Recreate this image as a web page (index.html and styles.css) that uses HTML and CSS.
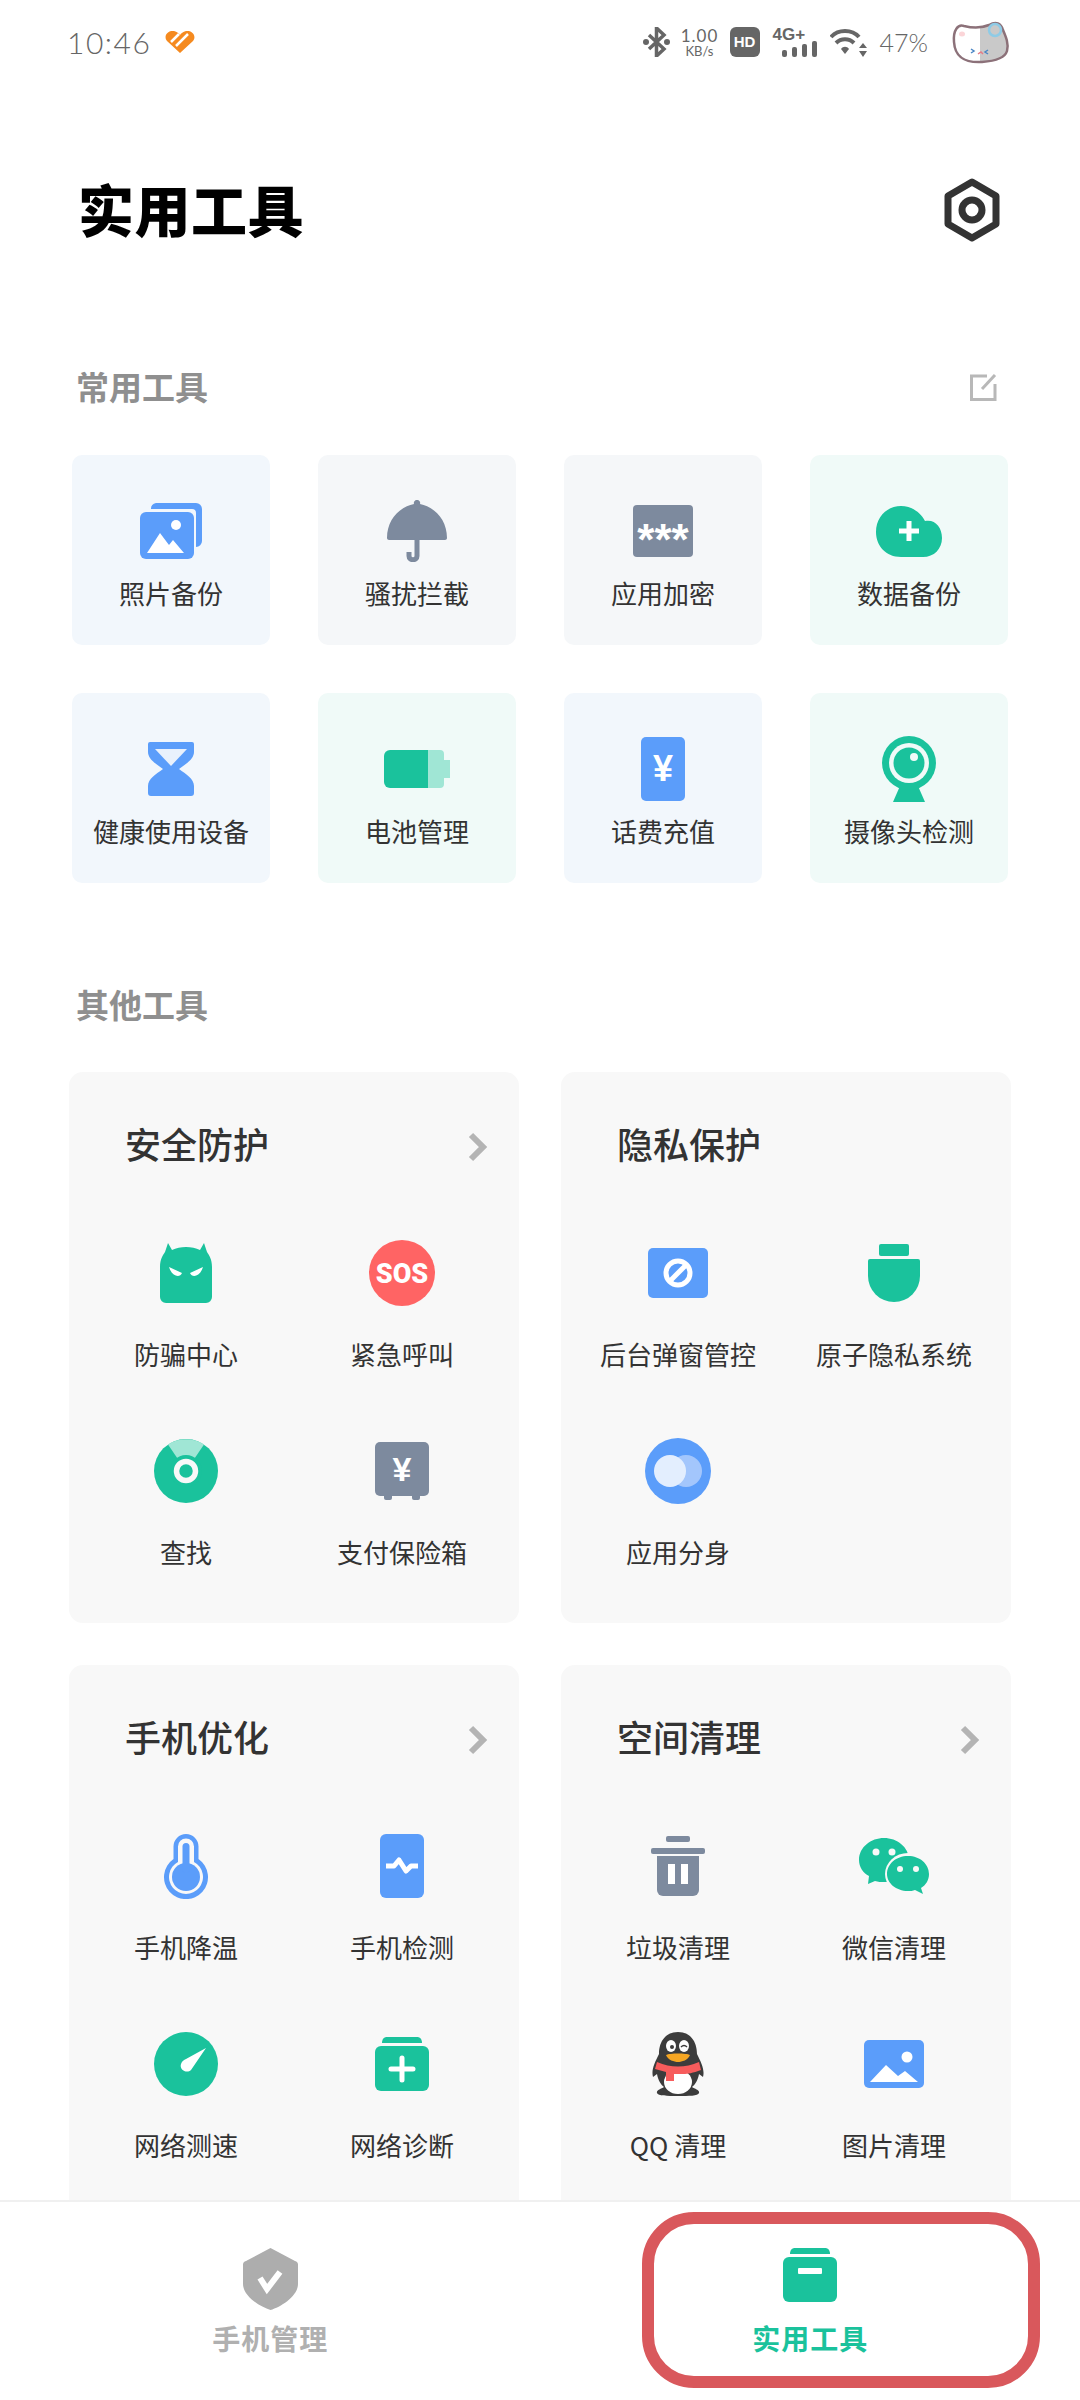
FILE: index.html
```html
<!DOCTYPE html>
<html lang="zh">
<head>
<meta charset="utf-8">
<title>实用工具</title>
<link rel="stylesheet" href="styles.css">
</head>
<body>
<div class="page">

<div class="status">
	<div class="status-left">
		<span class="time">10:46</span>
		<svg width="30" height="22" viewBox="0 0 30 22"><path d="M15 22 2 10C-2 5 3-1 9 0c3 .5 5 2.500 6 4 1-1.500 3-3.500 6-4 6-1 11 5 7 10z" fill="#f58a1f"/><path d="M14 3 6 11M23 3 11 15" stroke="#fff" stroke-width="2.500" fill="none"/></svg>
	</div>
	<div class="status-right">
		<svg width="27" height="30" viewBox="0 0 27 30"><path d="M6 8l15 14-7.500 7V1L21 8 6 22" fill="none" stroke="#666" stroke-width="3.500"/><circle cx="3" cy="15" r="3" fill="#666"/><circle cx="24" cy="15" r="3" fill="#666"/></svg>
		<div class="speed"><span class="speed-num">1.00</span><span class="speed-unit">KB/s</span></div>
		<div class="hd">HD</div>
		<div class="net">
			<span class="net-type">4G+</span>
			<svg width="35" height="16" viewBox="0 0 35 16"><g fill="#666"><rect x="0" y="9" width="5" height="7" rx="2"/><rect x="10" y="6" width="5" height="10" rx="2"/><rect x="20" y="3" width="5" height="13" rx="2"/><rect x="30" y="0" width="5" height="16" rx="2"/></g></svg>
		</div>
		<svg width="37" height="29" viewBox="0 0 37 29"><g fill="none" stroke="#666" stroke-width="4"><path d="M1 9C8 1 22 1 29 9"/><path d="M6 15c5-5 13-5 18 0"/></g><path d="M11 21c2-3 6-3 8 0l-4 5z" fill="#666"/><path d="M33 15l4 5h-8zM33 29l4-6h-8z" fill="#666"/></svg>
		<span class="battery">47%</span>
		<svg class="cat" width="66" height="50" viewBox="0 0 66 50">
			<path d="M3 25C2 10 8 3 16 5c8 2 18 2 26-1 8-4 14-2 17 6 4 8 7 16 4 25-3 9-12 13-28 14C14 50 4 42 3 25z" fill="#fff"/>
			<path d="M33 9c4 0 6 0 9-1 7-4 12-2 14 5 3 7 6 14 4 21-2 7-10 10-27 11z" fill="#c9c9c9"/>
			<path d="M7 25C6 13 11 7 17 9c8 2 18 2 25-1 7-4 12-2 14 5 3 7 6 14 4 21-2 7-11 10-25 11C17 46 8 40 7 25z" fill="none" stroke="#8c7179" stroke-width="2.500"/>
			<circle cx="48" cy="13" r="6" fill="none" stroke="#8ecbe6" stroke-width="2.500"/>
			<ellipse cx="15" cy="17" rx="3" ry="2.500" fill="#fbd5d8"/>
			<path d="M24 32l3 2-3 2" fill="none" stroke="#4a86c5" stroke-width="1.500"/>
			<path d="M41 33l-3 2 3 2" fill="none" stroke="#4a86c5" stroke-width="1.500"/>
			<path d="M31 37l3-2 2 2" fill="none" stroke="#e57c86" stroke-width="1.500"/>
		</svg>
	</div>
</div>

<div class="page-head">
	<h1 class="page-title">实用工具</h1>
	<svg width="56" height="64" viewBox="0 0 56 64"><path d="M28 4 52 18V46L28 60 4 46V18z" fill="none" stroke="#333" stroke-width="7" stroke-linejoin="round"/><circle cx="28" cy="32" r="10" fill="none" stroke="#333" stroke-width="7"/></svg>
</div>

<div class="section-head first">
	<h2 class="section-title">常用工具</h2>
	<svg width="27" height="27" viewBox="0 0 27 27"><path d="M17 2H1.500V25.500H25V10" fill="none" stroke="#b8b8b8" stroke-width="3"/><path d="M12 15 25 1" stroke="#b8b8b8" stroke-width="3" fill="none"/></svg>
</div>

<div class="tools">
	<div class="tool tint-blue">
		<div class="icon-box"><svg width="62" height="56" viewBox="0 0 62 56">
			<path d="M16 0H56a6 6 0 0 1 6 6V38a6 6 0 0 1-6 6V10a4 4 0 0 0-4-4H11a6 6 0 0 1 5-6z" fill="#5b9dfa"/>
			<rect x="0" y="9" width="54" height="47" rx="6" fill="#5b9dfa"/>
			<circle cx="36" cy="22" r="5" fill="#fff"/>
			<path d="M7 50 20 30l9 12 4-5 11 13z" fill="#fff"/>
		</svg></div>
		<div class="tool-name">照片备份</div>
	</div>
	<div class="tool tint-grey">
		<div class="icon-box"><svg width="60" height="62" viewBox="0 0 60 62">
			<path d="M30 0a3 3 0 0 1 3 4C48 7 60 20 60 38c0 1-1 2-2 2H2c-1 0-2-1-2-2C0 20 12 7 27 4a3 3 0 0 1 3-4z" fill="#7d8a9e"/>
			<path d="M30 38V56c0 5-8 5-8 0V52" fill="none" stroke="#7d8a9e" stroke-width="5"/>
		</svg></div>
		<div class="tool-name">骚扰拦截</div>
	</div>
	<div class="tool tint-grey">
		<div class="icon-box"><div class="keypad">***</div></div>
		<div class="tool-name">应用加密</div>
	</div>
	<div class="tool tint-green">
		<div class="icon-box"><svg width="66" height="51" viewBox="0 0 66 51">
			<path d="M25 51C10 51 0 40 0 26 0 11 11 0 25 0c11 0 20 7 24 15 10-2 17 6 17 17 0 11-8 19-19 19z" fill="#1ac29c"/>
			<path d="M33 15V35M23 25H43" stroke="#fff" stroke-width="5"/>
		</svg></div>
		<div class="tool-name">数据备份</div>
	</div>

	<div class="tool tint-blue">
		<div class="icon-box"><svg width="46" height="54" viewBox="0 0 46 54">
			<path d="M0 2a2 2 0 0 1 2-2H44a2 2 0 0 1 2 2V10c0 7-8 12-15 17 7 5 15 10 15 17V51a3 3 0 0 1-3 3H3a3 3 0 0 1-3-3V44c0-7 8-12 15-17C8 22 0 17 0 10z" fill="#5b9dfa"/>
			<path d="M7 7H39L23 24z" fill="#e9f1fc"/>
		</svg></div>
		<div class="tool-name">健康使用设备</div>
	</div>
	<div class="tool tint-green">
		<div class="icon-box"><svg width="66" height="38" viewBox="0 0 66 38">
			<path d="M44 0h12a4 4 0 0 1 4 4V10h6V28h-6V34a4 4 0 0 1-4 4H44z" fill="#a0e6d5"/>
			<path d="M6 0H44V38H6a6 6 0 0 1-6-6V6a6 6 0 0 1 6-6z" fill="#1ac29c"/>
		</svg></div>
		<div class="tool-name">电池管理</div>
	</div>
	<div class="tool tint-blue">
		<div class="icon-box"><svg width="44" height="64" viewBox="0 0 44 64">
			<rect width="44" height="64" rx="5" fill="#5b9dfa"/>
			<text class="glyph-bold" x="22" y="44" font-size="36" text-anchor="middle" fill="#fff">¥</text>
		</svg></div>
		<div class="tool-name">话费充值</div>
	</div>
	<div class="tool tint-green">
		<div class="icon-box"><svg width="54" height="66" viewBox="0 0 54 66">
			<path d="M18 50H36L43 66H11z" fill="#1ac29c"/>
			<circle cx="27" cy="27" r="27" fill="#1ac29c"/>
			<circle cx="27" cy="27" r="20" fill="#f0faf8"/>
			<circle cx="27" cy="27" r="15.500" fill="#1ac29c"/>
			<circle cx="32" cy="21" r="4" fill="#f0faf8"/>
		</svg></div>
		<div class="tool-name">摄像头检测</div>
	</div>
</div>

<div class="section-head second">
	<h2 class="section-title">其他工具</h2>
</div>

<div class="groups">
	<div class="group">
		<div class="group-head">
			<h3 class="group-title">安全防护</h3>
			<svg class="chevron" width="20" height="30" viewBox="0 0 20 30"><path d="M3 3 15 15 3 27" fill="none" stroke="#b4b4b4" stroke-width="6"/></svg>
		</div>
		<div class="items">
			<div class="item">
				<div class="icon-box"><svg width="52" height="60" viewBox="0 0 52 60">
					<path d="M0 24C0 16 3 12 5 9L8 0l4 7c4-2 9-3 14-3s10 1 14 3l4-7 3 9c2 3 5 7 5 15V54a6 6 0 0 1-6 6H6a6 6 0 0 1-6-6z" fill="#1ac29c"/>
					<path d="M9 24l13 6c-2 5-10 4-13-6zM43 24l-13 6c2 5 10 4 13-6z" fill="#fff"/>
				</svg></div>
				<div class="item-name">防骗中心</div>
			</div>
			<div class="item">
				<div class="icon-box"><svg width="66" height="66" viewBox="0 0 66 66">
					<circle cx="33" cy="33" r="33" fill="#ff6464"/>
					<text class="glyph-sos" x="33" y="43" font-size="27" text-anchor="middle" fill="#fff">SOS</text>
				</svg></div>
				<div class="item-name">紧急呼叫</div>
			</div>
			<div class="item">
				<div class="icon-box"><svg width="64" height="64" viewBox="0 0 64 64">
					<circle cx="32" cy="32" r="32" fill="#1ac29c"/>
					<path d="M14 5.500C24-1.500 40-1.500 50 5.500L32 32z" fill="#a0e6d5"/>
					<circle cx="32" cy="32" r="16" fill="#1ac29c"/>
					<circle cx="32" cy="32" r="9.500" fill="none" stroke="#f8f8f8" stroke-width="5.500"/>
				</svg></div>
				<div class="item-name">查找</div>
			</div>
			<div class="item">
				<div class="icon-box"><svg width="54" height="58" viewBox="0 0 54 58">
					<rect x="9" y="50" width="8" height="8" rx="2" fill="#7d8a9e"/>
					<rect x="37" y="50" width="8" height="8" rx="2" fill="#7d8a9e"/>
					<rect width="54" height="54" rx="5" fill="#7d8a9e"/>
					<text class="glyph-bold" x="27" y="39" font-size="34" text-anchor="middle" fill="#fff">¥</text>
				</svg></div>
				<div class="item-name">支付保险箱</div>
			</div>
		</div>
	</div>

	<div class="group">
		<div class="group-head">
			<h3 class="group-title">隐私保护</h3>
		</div>
		<div class="items">
			<div class="item">
				<div class="icon-box"><svg width="60" height="50" viewBox="0 0 60 50">
					<rect width="60" height="50" rx="5" fill="#5b9dfa"/>
					<circle cx="30" cy="25" r="12" fill="none" stroke="#fff" stroke-width="5"/>
					<path d="M22 33 38 17" stroke="#fff" stroke-width="5"/>
				</svg></div>
				<div class="item-name">后台弹窗管控</div>
			</div>
			<div class="item">
				<div class="icon-box"><svg width="52" height="58" viewBox="0 0 52 58">
					<rect x="11" y="0" width="30" height="12" rx="2" fill="#1ac29c"/>
					<path d="M2 15H50a2 2 0 0 1 2 2V32a26 26 0 0 1-52 0V17a2 2 0 0 1 2-2z" fill="#1ac29c"/>
				</svg></div>
				<div class="item-name">原子隐私系统</div>
			</div>
			<div class="item">
				<div class="icon-box"><svg width="66" height="66" viewBox="0 0 66 66">
					<circle cx="33" cy="33" r="33" fill="#5b9dfa"/>
					<circle cx="41" cy="33" r="16" fill="#a3c6fc"/>
					<circle cx="25" cy="33" r="16" fill="#e3eefe"/>
				</svg></div>
				<div class="item-name">应用分身</div>
			</div>
		</div>
	</div>

	<div class="group">
		<div class="group-head">
			<h3 class="group-title">手机优化</h3>
			<svg class="chevron" width="20" height="30" viewBox="0 0 20 30"><path d="M3 3 15 15 3 27" fill="none" stroke="#b4b4b4" stroke-width="6"/></svg>
		</div>
		<div class="items">
			<div class="item">
				<div class="icon-box"><svg width="44" height="65" viewBox="0 0 44 65">
					<path d="M9.500 25V12.500a12.500 12.500 0 0 1 25 0V25A22 22 0 1 1 9.500 25z" fill="#5b9dfa"/>
					<path d="M14 28V12.500a8 8 0 0 1 16 0V28A17 17 0 1 1 14 28z" fill="#f8f8f8"/>
					<circle cx="22" cy="43" r="14" fill="#5b9dfa"/>
					<rect x="18.500" y="9" width="7" height="30" rx="3.500" fill="#5b9dfa"/>
				</svg></div>
				<div class="item-name">手机降温</div>
			</div>
			<div class="item">
				<div class="icon-box"><svg width="44" height="64" viewBox="0 0 44 64">
					<rect width="44" height="64" rx="6" fill="#5b9dfa"/>
					<path d="M6 32H14L19 26 26 37 31 32H38" fill="none" stroke="#fff" stroke-width="5" stroke-linejoin="round"/>
				</svg></div>
				<div class="item-name">手机检测</div>
			</div>
			<div class="item">
				<div class="icon-box"><svg width="64" height="64" viewBox="0 0 64 64">
					<circle cx="32" cy="32" r="32" fill="#1ac29c"/>
					<path d="M52 16 37 38c-4 4-12 0-10-6 1-3 3-4 5-5z" fill="#fff"/>
				</svg></div>
				<div class="item-name">网络测速</div>
			</div>
			<div class="item">
				<div class="icon-box"><svg width="54" height="54" viewBox="0 0 54 54">
					<path d="M7 6C7 2 9 0 12 0H42c3 0 5 2 5 6z" fill="#1ac29c"/>
					<rect y="9" width="54" height="45" rx="6" fill="#1ac29c"/>
					<path d="M27 21V43M16 32H38" stroke="#fff" stroke-width="5" stroke-linecap="round"/>
				</svg></div>
				<div class="item-name">网络诊断</div>
			</div>
		</div>
	</div>

	<div class="group">
		<div class="group-head">
			<h3 class="group-title">空间清理</h3>
			<svg class="chevron" width="20" height="30" viewBox="0 0 20 30"><path d="M3 3 15 15 3 27" fill="none" stroke="#b4b4b4" stroke-width="6"/></svg>
		</div>
		<div class="items">
			<div class="item">
				<div class="icon-box"><svg width="54" height="60" viewBox="0 0 54 60">
					<rect x="15" y="0" width="24" height="6" rx="2" fill="#7d8a9e"/>
					<rect x="0" y="12" width="54" height="6" rx="2" fill="#7d8a9e"/>
					<path d="M6 20H48V54a6 6 0 0 1-6 6H12a6 6 0 0 1-6-6z" fill="#7d8a9e"/>
					<rect x="17" y="28" width="7" height="20" fill="#fff"/>
					<rect x="30" y="28" width="7" height="20" fill="#fff"/>
				</svg></div>
				<div class="item-name">垃圾清理</div>
			</div>
			<div class="item">
				<div class="icon-box"><svg width="70" height="56" viewBox="0 0 70 56">
					<path d="M25 0c13 0 25 9 25 22 0 12-11 22-25 22-3 0-6 0-9-1l-7 3 1-8C4 35 0 29 0 22 0 9 12 0 25 0z" fill="#1ac29c"/>
					<circle cx="17" cy="14" r="3.500" fill="#f8f8f8"/>
					<circle cx="33" cy="14" r="3.500" fill="#f8f8f8"/>
					<ellipse cx="49" cy="36" rx="23" ry="21" fill="#f8f8f8"/>
					<path d="M49 18c12 0 21 8 21 18 0 6-3 11-8 14l2 6-8-4c-2 1-5 1-7 1-12 0-21-8-21-17 0-10 9-18 21-18z" fill="#1ac29c"/>
					<circle cx="41" cy="31" r="3" fill="#f8f8f8"/>
					<circle cx="57" cy="31" r="3" fill="#f8f8f8"/>
				</svg></div>
				<div class="item-name">微信清理</div>
			</div>
			<div class="item">
				<div class="icon-box"><svg width="52" height="64" viewBox="0 0 52 64">
					<path d="M26 0C38 0 45 9 45 22c4 8 8 16 6 23l-4-3c-1 6-4 11-7 13 3 2 8 3 7 6-1 3-10 3-21 3s-20 0-21-3c-1-3 4-4 7-6-3-2-6-7-7-13l-4 3C-1 38 3 30 7 22 7 9 14 0 26 0z" fill="#3c3c3c"/>
					<ellipse cx="26" cy="50" rx="14" ry="12" fill="#fff"/>
					<ellipse cx="19" cy="14" rx="5" ry="6" fill="#fff"/>
					<ellipse cx="32" cy="14" rx="5" ry="6" fill="#fff"/>
					<circle cx="20" cy="15" r="2" fill="#3c3c3c"/>
					<path d="M29 15q3-3 6 0" fill="none" stroke="#3c3c3c" stroke-width="1.500"/>
					<path d="M14 23c4-2 20-2 24 0-2 5-8 7-12 7s-10-2-12-7z" fill="#f5a623"/>
					<path d="M5 30c14 6 28 6 42 0l2 8c-8 3-14 4-17 4H22V49H14V40L3 37z" fill="#f75c5c"/>
				</svg></div>
				<div class="item-name">QQ 清理</div>
			</div>
			<div class="item">
				<div class="icon-box"><svg width="60" height="48" viewBox="0 0 60 48">
					<rect width="60" height="48" rx="5" fill="#5b9dfa"/>
					<circle cx="43" cy="17" r="5.500" fill="#fff"/>
					<path d="M6 42 22 25 34 36 41 31 54 42z" fill="#fff"/>
				</svg></div>
				<div class="item-name">图片清理</div>
			</div>
		</div>
	</div>
</div>

<div class="tabs">
	<div class="tab">
		<svg width="55" height="62" viewBox="0 0 55 62"><path d="M27.500 0 52 13a4 4 0 0 1 3 4V36C55 48 38 59 27.500 62 17 59 0 48 0 36V17a4 4 0 0 1 3-4z" fill="#adadad"/><path d="M17 30l7 11 13-17" fill="none" stroke="#fff" stroke-width="6"/></svg>
		<span class="tab-name">手机管理</span>
	</div>
	<div class="tab active">
		<svg width="54" height="54" viewBox="0 0 54 54"><path d="M7 6C7 2 9 0 12 0H42c3 0 5 2 5 6z" fill="#1ac29c"/><rect y="9" width="54" height="45" rx="6" fill="#1ac29c"/><rect x="15" y="20" width="24" height="6" rx="1" fill="#fff"/></svg>
		<span class="tab-name">实用工具</span>
	</div>
	<div class="mark"></div>
</div>

</div>
</body>
</html>
```
FILE: styles.css
```css
* {
  box-sizing: border-box;
}

html, body {
  margin: 0;
  padding: 0;
  background: #fff;
}

body {
  font-family: "Noto Sans CJK SC", "Noto Sans", sans-serif;
}

h1, h2, h3 {
  margin: 0;
}

.page {
  width: 1080px;
  height: 2400px;
  overflow: hidden;
  position: relative;
}

/* status bar */
.status {
  height: 84px;
  display: flex;
  justify-content: space-between;
  align-items: center;
  padding: 0 67px;
  color: #666;
}

.status-left {
  display: flex;
  align-items: center;
  gap: 14px;
}

.time {
  font-family: Lato, sans-serif;
  font-weight: 300;
  font-size: 30px;
  letter-spacing: 1.500px;
  line-height: 1;
}

.status-right {
  display: flex;
  align-items: center;
  gap: 13px;
}

.speed {
  width: 34px;
  display: flex;
  flex-direction: column;
  align-items: center;
  font-family: Lato, sans-serif;
  line-height: 1;
}

.speed-num {
  font-size: 17px;
  letter-spacing: 1px;
}

.speed-unit {
  font-size: 13px;
  margin-top: 1px;
}

.hd {
  width: 30px;
  height: 30px;
  border-radius: 6px;
  background: #666;
  color: #fff;
  font-family: "Liberation Sans", sans-serif;
  font-weight: 700;
  font-size: 15px;
  line-height: 30px;
  text-align: center;
}

.net {
  width: 44px;
  height: 30px;
  display: flex;
  flex-direction: column;
  align-items: flex-end;
  position: relative;
}

.net-type {
  align-self: flex-start;
  font-family: "Liberation Sans", sans-serif;
  font-weight: 700;
  font-size: 17px;
  line-height: 15px;
  height: 14px;
}

.battery {
  font-family: Lato, sans-serif;
  font-weight: 300;
  font-size: 25px;
  line-height: 1;
}

.cat {
  margin-left: 6px;
}

/* page title */
.page-head {
  height: 126px;
  margin-top: 63px;
  padding: 0 80px 0 78px;
  display: flex;
  justify-content: space-between;
  align-items: center;
}

.page-title {
  font-size: 56px;
  font-weight: 900;
  color: #000;
  line-height: 1;
  margin-bottom: 5px;
  letter-spacing: 0.500px;
}

.section-head {
  height: 40px;
  display: flex;
  justify-content: space-between;
  align-items: center;
  padding: 0 83px 0 76px;
}

.section-head.first {
  margin-top: 94px;
}

.section-head.second {
  margin-top: 102px;
}

.section-title {
  font-size: 33px;
  font-weight: 700;
  color: #8f8f8f;
  line-height: 40px;
  margin-bottom: 2px;
}

/* common tools */
.tools {
  margin-top: 48px;
  padding-left: 72px;
  display: grid;
  grid-template-columns: repeat(4, 198px);
  grid-auto-rows: 190px;
  column-gap: 48px;
  row-gap: 48px;
}

.tool {
  border-radius: 10px;
  padding-top: 40px;
  display: flex;
  flex-direction: column;
  align-items: center;
}

.tint-blue {
  background: #f2f7fc;
}

.tint-grey {
  background: #f5f7f9;
}

.tint-green {
  background: #f0faf8;
}

.icon-box {
  height: 72px;
  display: flex;
  align-items: center;
  justify-content: center;
}

.keypad {
  width: 60px;
  height: 52px;
  border-radius: 4px;
  background: #7d8a9e;
  color: #fff;
  font-family: "Liberation Sans", sans-serif;
  font-weight: 700;
  font-size: 44px;
  line-height: 70px;
  text-align: center;
}

.tool-name {
  margin-top: 6px;
  font-size: 26px;
  line-height: 40px;
  color: #333;
  white-space: nowrap;
}

/* other tools */
.groups {
  margin-top: 47px;
  padding-left: 69px;
  display: grid;
  grid-template-columns: repeat(2, 450px);
  grid-auto-rows: 551px;
  column-gap: 42px;
  row-gap: 42px;
}

.group {
  background: #f8f8f8;
  border-radius: 14px;
  padding: 53px 9px 0;
}

.group-head {
  height: 40px;
  padding: 0 22px 0 47px;
  display: flex;
  justify-content: space-between;
  align-items: center;
}

.group-title {
  font-size: 36px;
  font-weight: 500;
  color: #333;
  line-height: 40px;
  margin-bottom: 4px;
}

.chevron {
  margin-top: 4px;
}

.items {
  margin-top: 72px;
  display: grid;
  grid-template-columns: repeat(2, 216px);
  row-gap: 61px;
}

.item {
  display: flex;
  flex-direction: column;
  align-items: center;
}

.item-name {
  margin-top: 25px;
  font-size: 26px;
  line-height: 40px;
  color: #333;
  white-space: nowrap;
}

.glyph-bold {
  font-family: "Liberation Sans", sans-serif;
  font-weight: 700;
}

.glyph-sos {
  font-family: Roboto, sans-serif;
  font-weight: 900;
}

/* bottom tabs */
.tabs {
  position: absolute;
  left: 0;
  right: 0;
  bottom: 0;
  height: 200px;
  background: #fff;
  border-top: 2px solid #f0f0f0;
  display: flex;
  align-items: flex-start;
  padding-top: 46px;
}

.tab {
  display: flex;
  flex-direction: column;
  align-items: center;
  height: 108px;
  justify-content: space-between;
}

.tab:first-child {
  width: 541px;
}

.tab.active {
  width: 540px;
}

.tab-name {
  font-size: 28px;
  font-weight: 700;
  line-height: 36px;
  letter-spacing: 1px;
  color: #b0b0b0;
}

.tab.active .tab-name {
  color: #1ac29c;
}

/* red marker drawn over the selected tab */
.mark {
  position: absolute;
  left: 642px;
  top: 10px;
  width: 398px;
  height: 176px;
  border: 12px solid #d9585c;
  border-radius: 52px;
}
```
